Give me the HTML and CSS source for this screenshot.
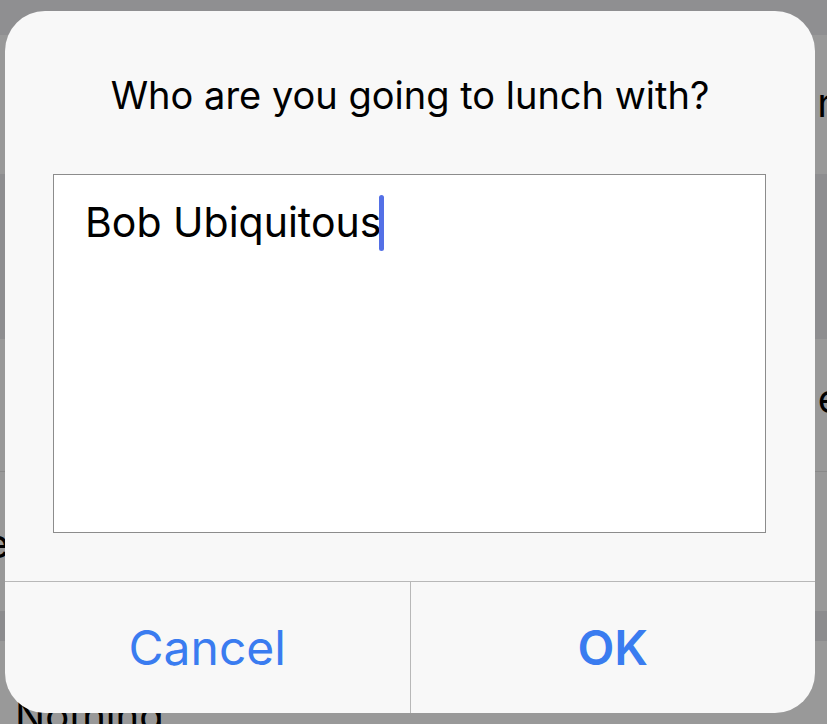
FILE: index.html
```html
<!DOCTYPE html>
<html lang="en">
<head>
<meta charset="utf-8">
<title>Lunch</title>
<link rel="stylesheet" href="styles.css">
</head>
<body>
<div class="screen">
  <div class="table">
    <div class="band band-header"></div>
    <div class="band band-row"><span class="peek peek-right">n</span></div>
    <div class="band band-gap"></div>
    <div class="band band-row band-line"><span class="peek peek-right">e</span></div>
    <div class="band band-row"><span class="peek peek-left">e</span></div>
    <div class="band band-gap2"></div>
    <div class="band band-row band-last"><span class="peek peek-nothing">Nothing</span></div>
  </div>

  <div class="dialog" role="dialog">
    <div class="dialog-title">Who are you going to lunch with?</div>
    <div class="field">
      <span class="field-text">Bob Ubiquitous</span><span class="caret"></span>
    </div>
    <div class="actions">
      <div class="action action-cancel">Cancel</div>
      <div class="action action-ok">OK</div>
    </div>
  </div>
</div>
</body>
</html>
```

FILE: styles.css
```css
* { box-sizing: border-box; }
html, body { margin: 0; padding: 0; }
body {
  width: 827px;
  height: 724px;
  overflow: hidden;
  font-family: "Inter", "Roboto", "Liberation Sans", sans-serif;
  background: #999999;
}
.screen {
  position: relative;
  width: 827px;
  height: 724px;
}
.table {
  display: flex;
  flex-direction: column;
  height: 100%;
}
.band { position: relative; overflow: hidden; }
.band-header { height: 35px; background: #8f8f91; }
.band-row { background: #999999; }
.band-row:nth-child(2) { height: 139px; }
.band-gap { height: 165px; background: #8e8e90; }
.band-line { height: 133px; border-bottom: 1px solid #8a8a8a; }
.band-row:nth-child(5) { height: 139px; }
.band-gap2 { height: 30px; background: #8c8c8e; }
.band-last { flex: 1; }

.peek {
  position: absolute;
  font-size: 40px;
  color: #000;
  line-height: 1;
}
.peek-right { right: -14px; top: 48px; }
.band-line .peek-right { right: -14px; top: 40px; }
.peek-left { left: -14px; top: 52px; }
.peek-nothing { left: 15px; top: 55px; }

.dialog {
  position: absolute;
  left: 5px;
  top: 11px;
  width: 810px;
  height: 702px;
  border-radius: 40px;
  background: #f8f8f8;
  display: flex;
  flex-direction: column;
  overflow: hidden;
}
.dialog-title {
  text-align: center;
  font-size: 38px;
  line-height: 46px;
  color: #000;
  padding-top: 61px;
  height: 163px;
}
.field {
  margin: 0 49px 0 48px;
  height: 359px;
  background: #fff;
  border: 1px solid #8c8c8c;
  padding: 21px 0 0 31px;
  font-size: 41px;
  line-height: 52px;
  color: #000;
  display: flex;
  align-items: flex-start;
}
.caret {
  display: inline-block;
  width: 5px;
  height: 56px;
  margin-top: -1px;
  margin-left: -2px;
  background: #5470e6;
  border-radius: 3px;
}
.actions {
  margin-top: 48px;
  border-top: 1px solid #b8b8b8;
  flex: 1;
  display: flex;
}
.action {
  flex: 1;
  display: flex;
  align-items: center;
  justify-content: center;
  font-size: 48px;
  color: #3a7cf0;
}
.action-cancel { border-right: 1px solid #b8b8b8; }
.action-ok { font-weight: 600; }
```
